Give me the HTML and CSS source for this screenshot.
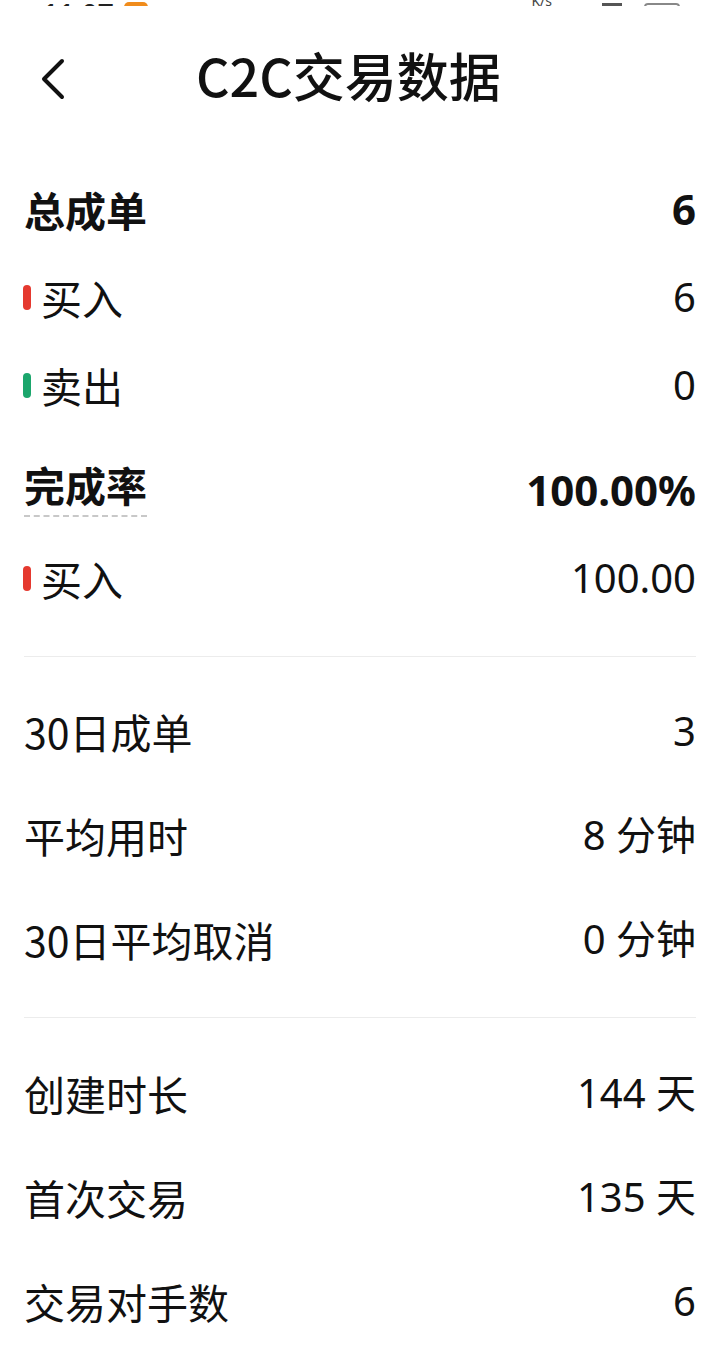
FILE: index.html
```html
<!DOCTYPE html>
<html lang="zh-CN">
<head>
  <meta charset="UTF-8" />
  <meta name="viewport" content="width=device-width, initial-scale=1.0" />
  <title>C2C交易数据</title>
  <link rel="stylesheet" href="styles.css">
</head>
<body>
  <div class="status-bar">
    <div class="status-left">
      <span class="clock">11:07</span>
      <span class="badge"></span>
    </div>
    <div class="status-right">
      <span class="speed">K/s</span>
      <span class="signal"></span>
      <span class="battery"></span>
    </div>
  </div>

  <header class="top-bar">
    <a class="back" href="#">
      <svg width="26" height="42" viewBox="0 0 26 42">
        <polyline points="22,3 4,21 22,39" fill="none" stroke="#111" stroke-width="4" stroke-linecap="round" stroke-linejoin="round" />
      </svg>
    </a>
    <h1>C2C交易数据</h1>
  </header>

  <section class="block block-orders">
    <div class="row row-total">
      <span class="label">总成单</span>
      <span class="value">6</span>
    </div>
    <div class="row">
      <span class="label"><i class="mark buy"></i>买入</span>
      <span class="value">6</span>
    </div>
    <div class="row">
      <span class="label"><i class="mark sell"></i>卖出</span>
      <span class="value">0</span>
    </div>
    <div class="row row-total row-rate">
      <span class="label"><span class="hint">完成率</span></span>
      <span class="value">100.00%</span>
    </div>
    <div class="row">
      <span class="label"><i class="mark buy"></i>买入</span>
      <span class="value">100.00</span>
    </div>
  </section>

  <section class="block block-stats">
    <div class="row tall">
      <span class="label">30日成单</span>
      <span class="value">3</span>
    </div>
    <div class="row tall">
      <span class="label">平均用时</span>
      <span class="value">8 分钟</span>
    </div>
    <div class="row tall">
      <span class="label">30日平均取消</span>
      <span class="value">0 分钟</span>
    </div>
  </section>

  <section class="block block-stats last">
    <div class="row tall">
      <span class="label">创建时长</span>
      <span class="value">144 天</span>
    </div>
    <div class="row tall">
      <span class="label">首次交易</span>
      <span class="value">135 天</span>
    </div>
    <div class="row tall">
      <span class="label">交易对手数</span>
      <span class="value">6</span>
    </div>
  </section>
</body>
</html>
```

FILE: styles.css
```css
* {
  margin: 0;
  padding: 0;
  box-sizing: border-box;
}
html, body {
  height: 100%;
  overflow: hidden;
}
body {
  background: #fff;
  color: #111;
  font-family: 'Noto Sans', 'Noto Sans CJK SC', sans-serif;
}

/* status bar, mostly cut off at the top edge */
.status-bar {
  height: 6px;
  overflow: hidden;
  display: flex;
  justify-content: space-between;
  align-items: flex-end;
  padding: 0 40px 0 42px;
}
.status-left,
.status-right {
  display: flex;
  align-items: flex-end;
  gap: 10px;
}
.clock {
  font-size: 28px;
  line-height: 28px;
  font-weight: 600;
  color: #222;
  transform: translateY(22px);
}
.badge {
  width: 24px;
  height: 22px;
  border-radius: 5px;
  background: #f08c1c;
  transform: translateY(18px);
}
.speed {
  font-size: 14px;
  line-height: 14px;
  color: #444;
  transform: translateY(2px);
  margin-right: 40px;
}
.signal {
  width: 20px;
  height: 20px;
  background: #555;
  transform: translateY(17px);
  margin-right: 12px;
}
.battery {
  width: 36px;
  height: 18px;
  border: 2px solid #888;
  border-radius: 4px;
  transform: translateY(15px);
}

.top-bar {
  height: 159px;
  display: flex;
  align-items: center;
  padding: 0 0 0 40px;
}
.back {
  display: flex;
  width: 26px;
  margin-top: -13px;
}
.top-bar h1 {
  margin: -21px 0 0 130px;
  font-family: 'Noto Sans CJK SC', sans-serif;
  font-size: 52px;
  font-weight: 500;
  line-height: 1;
  color: #111;
}

.block {
  margin: 0 24px;
}
.block-orders {
  padding-bottom: 34px;
  border-bottom: 1px solid #ececec;
}
.block-stats {
  padding: 22px 0 26px;
  border-bottom: 1px solid #ececec;
}
.block-stats.last {
  padding-top: 23px;
  border-bottom: none;
}

.row {
  height: 88px;
  display: flex;
  justify-content: space-between;
  align-items: center;
  font-size: 41px;
  line-height: 1;
}
.row.tall {
  height: 104px;
}
.row-rate {
  margin-top: 17px;
}
.row-total {
  font-weight: 700;
}
.label {
  display: flex;
  align-items: center;
  font-family: 'Noto Sans CJK SC', sans-serif;
}
.value {
  font-family: 'Noto Sans', 'Noto Sans CJK SC', sans-serif;
  font-size: 40px;
  text-align: right;
}
.row-total .value {
  font-size: 42px;
}
.mark {
  width: 8px;
  height: 25px;
  border-radius: 4px;
  margin: 0 10px 0 -1px;
}
.mark.buy {
  background: #e5392f;
}
.mark.sell {
  background: #1ba66c;
}
.hint {
  padding-bottom: 10px;
  border-bottom: 2px dashed #c8c8c8;
}
```
